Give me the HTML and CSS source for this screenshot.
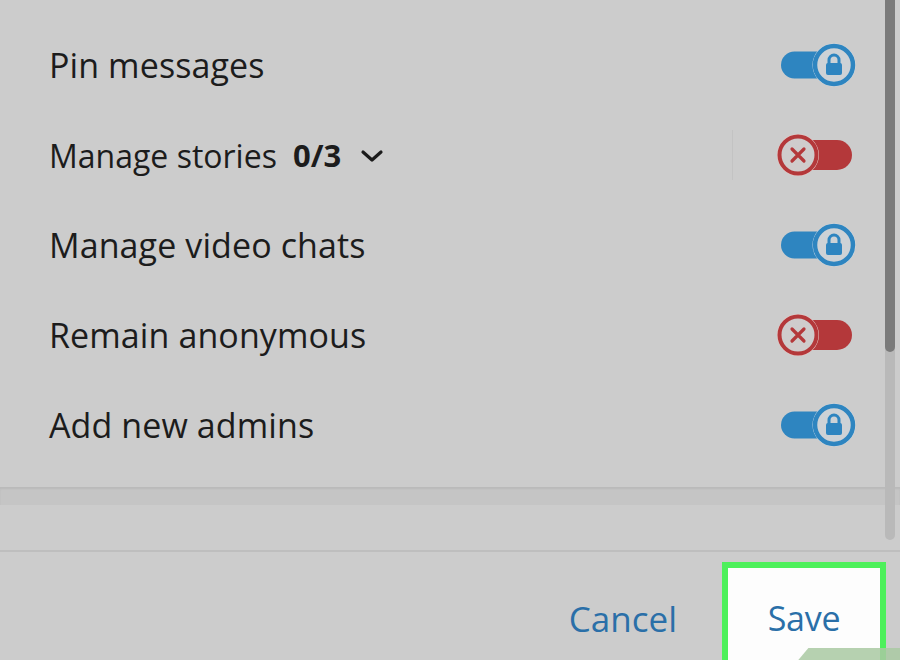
FILE: index.html
```html
<!DOCTYPE html>
<html>
<head>
<meta charset="utf-8">
<link rel="stylesheet" href="styles.css">
</head>
<body>
<div class="page">
  <div class="list">
    <div class="row">
      <span class="label">Pin messages</span>
      <svg class="toggle" width="80" height="46" viewBox="0 0 80 46"><rect x="5" y="9.5" width="66" height="27" rx="13.5" fill="#2e85c0"/><circle cx="58" cy="23" r="21.5" fill="#e2e6ea"/><circle cx="58" cy="23" r="19" fill="#cdd2d6" stroke="#2e85c0" stroke-width="4.5"/><path d="M53 22 v-4 a5 5 0 0 1 10 0 v4" fill="none" stroke="#2e85c0" stroke-width="3"/><rect x="50" y="21" width="16" height="12" rx="2" fill="#2e85c0"/></svg>
    </div>
    <div class="row">
      <span class="label small">Manage stories <b class="count">0/3</b><svg class="chev" width="24" height="14" viewBox="0 0 24 14"><path d="M3 3 L12 11 L21 3" fill="none" stroke="#1b1b1b" stroke-width="3.2" stroke-linecap="round" stroke-linejoin="round"/></svg></span>
      <span class="vsep"></span>
      <svg class="toggle" width="80" height="46" viewBox="0 0 80 46"><rect x="6" y="8" width="70" height="30" rx="15" fill="#b4383a"/><circle cx="22" cy="23" r="21" fill="#e6c9c6"/><circle cx="22" cy="23" r="18.5" fill="#cfcccc" stroke="#b4383a" stroke-width="4"/><path d="M16 17 L28 29 M28 17 L16 29" stroke="#b4383a" stroke-width="3.2" stroke-linecap="round"/></svg>
    </div>
    <div class="row">
      <span class="label">Manage video chats</span>
      <svg class="toggle" width="80" height="46" viewBox="0 0 80 46"><rect x="5" y="9.5" width="66" height="27" rx="13.5" fill="#2e85c0"/><circle cx="58" cy="23" r="21.5" fill="#e2e6ea"/><circle cx="58" cy="23" r="19" fill="#cdd2d6" stroke="#2e85c0" stroke-width="4.5"/><path d="M53 22 v-4 a5 5 0 0 1 10 0 v4" fill="none" stroke="#2e85c0" stroke-width="3"/><rect x="50" y="21" width="16" height="12" rx="2" fill="#2e85c0"/></svg>
    </div>
    <div class="row">
      <span class="label">Remain anonymous</span>
      <svg class="toggle" width="80" height="46" viewBox="0 0 80 46"><rect x="6" y="8" width="70" height="30" rx="15" fill="#b4383a"/><circle cx="22" cy="23" r="21" fill="#e6c9c6"/><circle cx="22" cy="23" r="18.5" fill="#cfcccc" stroke="#b4383a" stroke-width="4"/><path d="M16 17 L28 29 M28 17 L16 29" stroke="#b4383a" stroke-width="3.2" stroke-linecap="round"/></svg>
    </div>
    <div class="row">
      <span class="label">Add new admins</span>
      <svg class="toggle" width="80" height="46" viewBox="0 0 80 46"><rect x="5" y="9.5" width="66" height="27" rx="13.5" fill="#2e85c0"/><circle cx="58" cy="23" r="21.5" fill="#e2e6ea"/><circle cx="58" cy="23" r="19" fill="#cdd2d6" stroke="#2e85c0" stroke-width="4.5"/><path d="M53 22 v-4 a5 5 0 0 1 10 0 v4" fill="none" stroke="#2e85c0" stroke-width="3"/><rect x="50" y="21" width="16" height="12" rx="2" fill="#2e85c0"/></svg>
    </div>
  </div>
  <div class="band"></div>
  <div class="gapzone"></div>
  <div class="hline"></div>
  <div class="footer">
    <span class="btn">Cancel</span>
    <div class="savebox"><span class="btn">Save</span></div>
  </div>
  <div class="scroll"><div class="thumb"></div></div>
  <div class="greenmark"></div>
</div>
</body>
</html>
```

FILE: styles.css
```css
html, body {
  margin: 0;
  padding: 0;
}
body {
  width: 900px;
  height: 660px;
  overflow: hidden;
  background: #cccccc;
  font-family: "Open Sans", "Liberation Sans", sans-serif;
}
.page {
  position: relative;
  width: 900px;
  height: 660px;
  display: flex;
  flex-direction: column;
}
.page > div {
  flex-shrink: 0;
}
.list {
  padding: 20px 44px 0 49px;
  height: 467px;
  box-sizing: border-box;
}
.row {
  height: 90px;
  display: flex;
  align-items: center;
}
.label {
  font-size: 34px;
  color: #1c1c1c;
  letter-spacing: 0.1px;
  display: flex;
  align-items: center;
}
.label.small {
  font-size: 32px;
  letter-spacing: 0;
}
.count {
  font-weight: 700;
  margin-left: 16px;
  font-size: 31px;
}
.chev {
  margin-left: 19px;
  margin-top: 2px;
}
.toggle {
  margin-left: auto;
  display: block;
}
.vsep {
  margin-left: auto;
  width: 1px;
  height: 50px;
  background: #c3c3c3;
  margin-right: 43px;
}
.vsep + .toggle {
  margin-left: 0;
}
.band {
  margin-top: 20px;
  height: 18px;
  background: #c5c5c5;
  box-shadow: inset 0 2px 2px rgba(0,0,0,0.06);
}
.gapzone {
  height: 45px;
}
.hline {
  height: 2px;
  background: #bebebe;
}
.page > .footer {
  flex: 1 1 auto;
  min-height: 0;
  display: flex;
  justify-content: flex-end;
  align-items: flex-start;
  padding: 10px 14px 0 0;
}
.btn {
  font-size: 34px;
  font-weight: 500;
  color: #2a6fa8;
  letter-spacing: -0.3px;
}
.footer > .btn {
  margin-top: 33px;
  margin-right: 45px;
  letter-spacing: 0;
  font-size: 35px;
}
.savebox {
  width: 164px;
  height: 110px;
  flex-shrink: 0;
  box-sizing: border-box;
  border: 6px solid #4df05b;
  background: #fdfdfd;
  display: flex;
  justify-content: center;
  padding-top: 27px;
}
.scroll {
  position: absolute;
  left: 885px;
  top: -10px;
  width: 10px;
  height: 550px;
  border-radius: 5px;
  background: #b9b9b9;
}
.thumb {
  height: 362px;
  border-radius: 5px;
  background: #7a7a7a;
}
.greenmark {
  position: absolute;
  left: 800px;
  top: 648px;
  width: 120px;
  height: 20px;
  background: #a9c9a2;
  transform: skewX(-40deg);
  opacity: 0.85;
}
```
